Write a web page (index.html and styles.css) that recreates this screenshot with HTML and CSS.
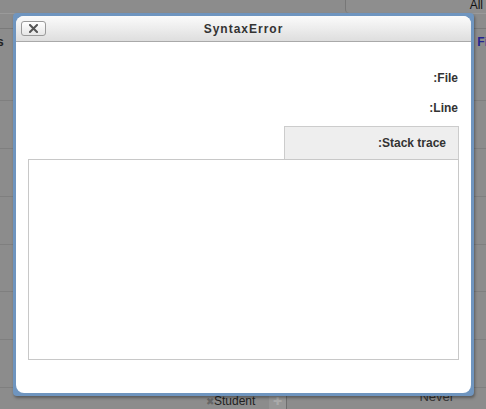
FILE: index.html
```html
<!DOCTYPE html>
<html>
<head>
<meta charset="utf-8">
<link rel="stylesheet" href="styles.css">
</head>
<body>
<div class="page">
  <div class="bg-head">
    <div class="bg-all">All</div>
  </div>
  <div class="bg-sub"></div>
  <div class="bg-row first">
    <span class="bg-s">s</span>
    <span class="bg-fi">Fi</span>
  </div>
  <div class="bg-row"></div>
  <div class="bg-row"></div>
  <div class="bg-row"></div>
  <div class="bg-row"></div>
  <div class="bg-row"></div>
  <div class="bg-row"></div>
  <div class="bg-foot">
    <span class="bg-student"><span class="bg-x">✖</span>Student</span>
    <span class="bg-btn">✚</span>
    <span class="bg-never">Never</span>
  </div>

  <div class="dialog-frame">
    <div class="dialog" dir="rtl">
      <div class="titlebar">
        <span class="title" dir="ltr">SyntaxError</span>
        <button class="close" aria-label="close"><svg width="9" height="9" viewBox="0 0 9 9"><path d="M1 1 L8 8 M8 1 L1 8" stroke="#555" stroke-width="2" stroke-linecap="square"/></svg></button>
      </div>
      <div class="body">
        <div class="field file">File:</div>
        <div class="field line">Line:</div>
        <div class="tabs">
          <div class="tab">Stack trace:</div>
        </div>
        <div class="trace"></div>
      </div>
    </div>
  </div>
</div>
</body>
</html>
```

FILE: styles.css
```css
html, body {
  margin: 0;
  padding: 0;
}
body {
  width: 486px;
  height: 409px;
  overflow: hidden;
  background: #8c8c8c;
  font-family: "Liberation Sans", Arial, sans-serif;
}
.page {
  position: relative;
  width: 486px;
  height: 409px;
  display: flex;
  flex-direction: column;
}
.bg-head {
  height: 14px;
  display: flex;
  justify-content: flex-end;
  border-bottom: 1px solid #9a9a9a;
  box-sizing: border-box;
}
.bg-all {
  width: 141px;
  border-left: 1px solid #777;
  border-bottom-left-radius: 4px;
  text-align: right;
  font-size: 12px;
  line-height: 11px;
  color: #111;
  padding-right: 3px;
  box-sizing: border-box;
  background: #8e8e8e;
}
.bg-sub {
  height: 14px;
  border-bottom: 1px solid #7a7a7a;
}
.bg-row {
  height: 48px;
  border-bottom: 1px solid #7f7f7f;
  box-sizing: border-box;
  position: relative;
  display: flex;
  justify-content: space-between;
  align-items: flex-start;
}
.bg-row.first {
  height: 73px;
}
.bg-s {
  font-size: 12px;
  font-weight: bold;
  color: #222;
  margin-left: -3px;
  margin-top: 6px;
}
.bg-fi {
  font-size: 12px;
  font-weight: bold;
  color: #23238f;
  margin-top: 6px;
  margin-right: -2px;
}
.bg-foot {
  flex: 1;
  display: flex;
  align-items: flex-start;
  font-size: 12px;
  color: #222;
}
.bg-student {
  margin-left: 206px;
  margin-top: 6px;
}
.bg-x {
  color: #666;
  font-size: 10px;
}
.bg-btn {
  margin-left: 14px;
  margin-top: 5px;
  width: 17px;
  height: 16px;
  background: #969696;
  border-right: 1px solid #6e6e6e;
  color: #aaa;
  font-size: 11px;
  text-align: center;
  line-height: 16px;
}
.bg-never {
  margin-left: 132px;
  margin-top: 1px;
  color: #333;
  font-size: 13px;
}

.dialog-frame {
  position: absolute;
  left: 13px;
  top: 13px;
  width: 461px;
  height: 383px;
  box-sizing: border-box;
  padding: 3px;
  background: #6f95bf;
  border-radius: 4px;
  box-shadow: 1px 2px 3px rgba(0, 0, 0, 0.35);
}
.dialog {
  width: 455px;
  height: 377px;
  background: #fff;
  border-radius: 8px;
  overflow: hidden;
  display: flex;
  flex-direction: column;
}
.titlebar {
  height: 26px;
  flex: none;
  box-sizing: border-box;
  background: linear-gradient(#fbfbfb, #dedede);
  border-bottom: 1px solid #a9a9a9;
  position: relative;
  display: flex;
  align-items: center;
  justify-content: center;
}
.title {
  font-size: 12px;
  font-weight: bold;
  letter-spacing: 1px;
  color: #333;
}
.close {
  position: absolute;
  left: 5px;
  top: 5px;
  width: 25px;
  height: 15px;
  padding: 0;
  margin: 0;
  border: 1px solid #9a9a9a;
  border-radius: 3px;
  background: linear-gradient(#ffffff, #e6e6e6);
  display: flex;
  align-items: center;
  justify-content: center;
}
.close svg {
  display: block;
}
.body {
  padding: 30px 12px 0 12px;
  display: flex;
  flex-direction: column;
  color: #333;
  font-size: 12px;
  font-weight: bold;
}
.field {
  line-height: 12px;
  padding-right: 1px;
}
.field.file {
  margin-bottom: 18px;
}
.field.line {
  margin-bottom: 12px;
}
.tabs {
  display: flex;
}
.tab {
  width: 175px;
  height: 33px;
  box-sizing: border-box;
  background: #eeeeee;
  border: 1px solid #cccccc;
  border-bottom: none;
  padding-right: 12px;
  line-height: 32px;
}
.trace {
  height: 201px;
  box-sizing: border-box;
  border: 1px solid #c8c8c8;
}
```
